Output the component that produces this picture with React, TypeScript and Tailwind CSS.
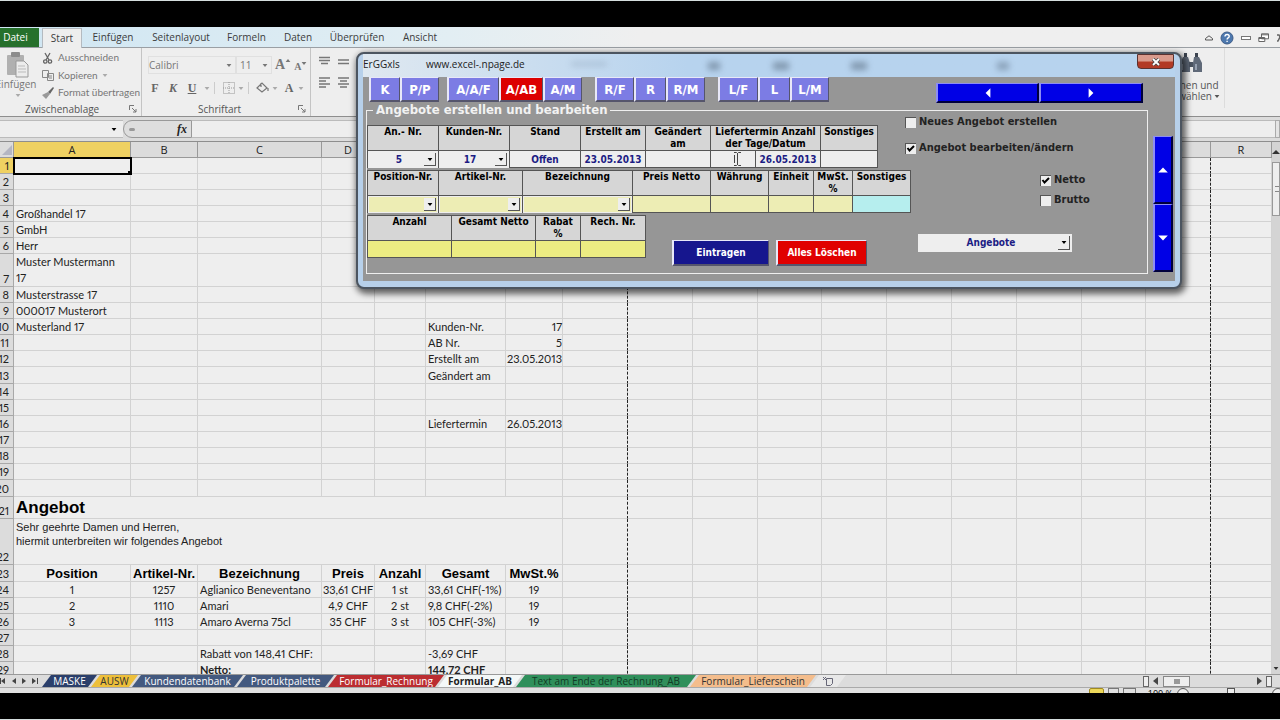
import * as React from "react"

type Cell = { text: string; className?: string }
type Row = { n: number; height: string; cells?: Record<string, Cell>; merged?: React.ReactNode }

const COLUMNS = [
  { name: "A", width: "w-[117px]" },
  { name: "B", width: "w-[67px]" },
  { name: "C", width: "w-[124px]" },
  { name: "D", width: "w-[53px]" },
  { name: "E", width: "w-[51px]" },
  { name: "F", width: "w-[80px]" },
  { name: "G", width: "w-[57px]" },
  { name: "H", width: "w-[65px]" },
  { name: "I", width: "w-[65px]" },
  { name: "J", width: "w-[65px]" },
  { name: "K", width: "w-[64px]" },
  { name: "L", width: "w-[65px]" },
  { name: "M", width: "w-[65px]" },
  { name: "N", width: "w-[65px]" },
  { name: "O", width: "w-[65px]" },
  { name: "P", width: "w-[64px]" },
  { name: "Q", width: "w-[65px]" },
  { name: "R", width: "" },
]

const HEAD = "text-center font-bold text-[13px] font-['Liberation_Sans',sans-serif] text-black"
const CENTER = "text-center"
const RIGHT = "text-right"

const item = (pos: string, nr: string, name: string, price: string, count: string, total: string): Record<string, Cell> => ({
  A: { text: pos, className: CENTER },
  B: { text: nr, className: CENTER },
  C: { text: name },
  D: { text: price, className: CENTER },
  E: { text: count, className: CENTER },
  F: { text: total },
  G: { text: "19", className: CENTER },
})

const ROWS: Row[] = [
  { n: 1, height: "h-4" },
  { n: 2, height: "h-4" },
  { n: 3, height: "h-4" },
  { n: 4, height: "h-4", cells: { A: { text: "Großhandel 17" } } },
  { n: 5, height: "h-4", cells: { A: { text: "GmbH" } } },
  { n: 6, height: "h-4", cells: { A: { text: "Herr" } } },
  { n: 7, height: "h-[33px]", cells: { A: { text: "Muster Mustermann\n17", className: "whitespace-pre-line" } } },
  { n: 8, height: "h-4", cells: { A: { text: "Musterstrasse 17" } } },
  { n: 9, height: "h-4", cells: { A: { text: "000017 Musterort" } } },
  { n: 10, height: "h-4", cells: { A: { text: "Musterland 17" }, F: { text: "Kunden-Nr." }, G: { text: "17", className: RIGHT } } },
  { n: 11, height: "h-4", cells: { F: { text: "AB Nr." }, G: { text: "5", className: RIGHT } } },
  { n: 12, height: "h-4", cells: { F: { text: "Erstellt am" }, G: { text: "23.05.2013", className: RIGHT } } },
  { n: 13, height: "h-[17px]", cells: { F: { text: "Geändert am" } } },
  { n: 14, height: "h-4" },
  { n: 15, height: "h-4" },
  { n: 16, height: "h-4", cells: { F: { text: "Liefertermin" }, G: { text: "26.05.2013", className: RIGHT } } },
  { n: 17, height: "h-4" },
  { n: 18, height: "h-4" },
  { n: 19, height: "h-4" },
  { n: 20, height: "h-[17px]" },
  {
    n: 21,
    height: "h-[22px]",
    merged: <div className="text-[17px] leading-[21px] font-bold text-black">Angebot</div>,
  },
  {
    n: 22,
    height: "h-[46px]",
    merged: (
      <div className="pt-px text-[11px] leading-[14px]">
        Sehr geehrte Damen und Herren,
        <br />
        hiermit unterbreiten wir folgendes Angebot
      </div>
    ),
  },
  {
    n: 23,
    height: "h-[17px]",
    cells: {
      A: { text: "Position", className: HEAD },
      B: { text: "Artikel-Nr.", className: HEAD },
      C: { text: "Bezeichnung", className: HEAD },
      D: { text: "Preis", className: HEAD },
      E: { text: "Anzahl", className: HEAD },
      F: { text: "Gesamt", className: HEAD },
      G: { text: "MwSt.%", className: HEAD },
    },
  },
  { n: 24, height: "h-4", cells: item("1", "1257", "Aglianico Beneventano", "33,61 CHF", "1 st", "33,61 CHF(-1%)") },
  { n: 25, height: "h-4", cells: item("2", "1110", "Amari", "4,9 CHF", "2 st", "9,8 CHF(-2%)") },
  { n: 26, height: "h-4", cells: item("3", "1113", "Amaro Averna 75cl", "35 CHF", "3 st", "105 CHF(-3%)") },
  { n: 27, height: "h-4" },
  { n: 28, height: "h-4", cells: { C: { text: "Rabatt von 148,41 CHF:" }, F: { text: "-3,69 CHF" } } },
  {
    n: 29,
    height: "h-4",
    cells: { C: { text: "Netto:", className: "font-bold" }, F: { text: "144,72 CHF", className: "font-bold" } },
  },
]

/* ---------- small drawings ---------- */

function Caret({ className = "" }: { className?: string }) {
  return (
    <svg viewBox="-1 0 10 5" className={`h-[3px] w-1.5 shrink-0 ${className}`} aria-hidden="true">
      <path d="M0 0h8L4 5z" fill="currentColor" />
    </svg>
  )
}

function Launcher() {
  return (
    <svg viewBox="0 0 8 8" className="size-2" fill="none" stroke="#777" aria-hidden="true">
      <path d="M.5 5V.5H5M3 3l4 4M7 4v3H4" />
    </svg>
  )
}

function Lines({ d }: { d: string }) {
  return (
    <svg viewBox="0 0 14 12" className="h-3 w-3.5" fill="none" stroke="#777" strokeWidth="1.4" aria-hidden="true">
      <path d={d} />
    </svg>
  )
}

/* ---------- ribbon ---------- */

const RIBBON_TABS = [
  { name: "Einfügen", width: "w-[62px]" },
  { name: "Seitenlayout", width: "w-[74px]" },
  { name: "Formeln", width: "w-[57px]" },
  { name: "Daten", width: "w-[46px]" },
  { name: "Überprüfen", width: "w-[72px]" },
  { name: "Ansicht", width: "w-[54px]" },
]

function RibbonTabs() {
  return (
    <nav className="flex h-[21px] items-stretch border-b border-[#9a9fa4] bg-gradient-to-r from-[#cfe6f3] via-[#e2eef3] via-35% to-[#efefef] to-50% pt-px text-[10px] text-[#3c3c3c]">
      <button className="w-[39px] bg-[#26702c] pr-2 text-white">Datei</button>
      <button className="-mb-px ml-[3px] w-10 border-x border-t border-[#b4bac0] bg-[#eeeeee]">Start</button>
      {RIBBON_TABS.map((tab) => (
        <button key={tab.name} className={tab.width}>
          {tab.name}
        </button>
      ))}
      <div className="ml-auto flex items-center gap-[7px] overflow-hidden">
        <button aria-label="Menüband minimieren">
          <svg viewBox="0 0 8 6" className="h-1.5 w-2" fill="none" stroke="#555">
            <path d="M.5 3.500 4 .8l3.500 2.700v1.500h-7z" />
          </svg>
        </button>
        <button aria-label="Hilfe">
          <svg viewBox="0 0 14 14" className="size-3.5">
            <circle cx="7" cy="7" r="6" fill="#4d78ae" stroke="#3d5c88" />
            <path d="M5 5.400c0-2.700 4.200-2.500 4.200 0 0 1.500-2.100 1.500-2.100 3M7.100 9.800v1.200" fill="none" stroke="#fff" strokeWidth="1.400" />
          </svg>
        </button>
        <button aria-label="Minimieren">
          <svg viewBox="0 0 10 6" className="h-1.5 w-2.5" fill="#fff" stroke="#777">
            <rect x=".5" y="1.500" width="9" height="3" />
          </svg>
        </button>
        <button aria-label="Wiederherstellen">
          <svg viewBox="0 0 11 10" className="h-2.5 w-[11px]" fill="#fff" stroke="#666">
            <path d="M3.500.8h7v5h-7zM.8 4.500h6v4h-6z" />
            <path d="M.8 5.500h6M3.500 1.800h7" />
          </svg>
        </button>
        <button aria-label="Schließen" className="-mr-1">
          <svg viewBox="0 0 8 8" className="size-2" fill="none" stroke="#666" strokeWidth="1.500">
            <path d="M1 1h2l3 6h1M7 1H5L2 7H1" />
          </svg>
        </button>
      </div>
    </nav>
  )
}

function Ribbon() {
  return (
    <div className="flex h-[69px] border-b border-[#8e8e8e] bg-[#eeeeee] text-[10px] text-[#777]">
      <section className="flex w-[142px] flex-col border-r border-[#c4c4c4]">
        <div className="flex flex-1">
          <button className="flex w-[36px] shrink-0 flex-col items-center pt-1">
            <svg viewBox="0 0 24 26" className="h-[26px] w-6" aria-hidden="true">
              <rect x="1" y="3" width="17" height="20" rx="1" fill="#b0b0b0" />
              <rect x="5" y="0" width="9" height="5" rx="1" fill="#8b8b8b" />
              <path d="M10 9h8l4 4v12H10z" fill="#ececec" stroke="#999" />
              <path d="M12 14h7M12 17h8M12 20h8" stroke="#bbb" />
            </svg>
            <span className="-ml-1 leading-3">Einfügen</span>
            <Caret className="mt-1 text-[#aaa]" />
          </button>
          <div className="flex flex-col pt-px pl-[6px] font-['Lato',sans-serif]">
            <button className="flex h-[17px] items-center gap-1">
              <svg viewBox="0 0 12 12" className="size-3" fill="none" stroke="#666" strokeWidth="1.300" aria-hidden="true">
                <path d="M3 1l4 7M8 1L4 8" />
                <circle cx="3.300" cy="9.500" r="1.700" />
                <circle cx="8" cy="9.500" r="1.700" />
              </svg>
              Ausschneiden
            </button>
            <button className="flex h-[18px] items-center gap-1">
              <svg viewBox="0 0 12 12" className="size-3" fill="#eee" stroke="#888" aria-hidden="true">
                <path d="M.5 1.500h6v7h-6zM5.500 4.500h6v7h-6zM7 7h3M7 9h3" />
              </svg>
              Kopieren
              <Caret className="text-[#aaa]" />
            </button>
            <button className="flex h-[17px] items-center gap-1 whitespace-nowrap">
              <svg viewBox="0 0 12 12" className="size-3" aria-hidden="true">
                <path d="M11 0 6 5l2 2 4-6z" fill="#666" />
                <path d="M6 5 0 8l4 4 4-5z" fill="#999" />
              </svg>
              Format übertragen
            </button>
          </div>
        </div>
        <div className="flex h-[14px] items-center justify-between pr-1 pl-[25px] text-[#555]">
          Zwischenablage
          <Launcher />
        </div>
      </section>

      <section className="flex w-[169px] flex-col border-r border-[#c4c4c4]">
        <div className="flex flex-1 flex-col gap-[5px] pt-[8px] pl-[6px]">
          <div className="flex h-[18px] items-center">
            <button className="flex h-full w-[88px] items-center justify-between border border-[#e0e0e0] pr-[3px]">
              Calibri
              <Caret />
            </button>
            <button className="flex h-full w-[36px] items-center justify-between border border-[#e0e0e0] pr-[3px] pl-[3px]">
              11
              <Caret />
            </button>
            <button className="ml-[3px] flex items-start font-['Liberation_Serif',serif] text-[14px] leading-none font-bold">
              A<Caret className="mt-px rotate-180" />
            </button>
            <button className="mt-[3px] ml-[3px] flex items-start font-['Liberation_Serif',serif] text-[10px] leading-none font-bold">
              A<Caret />
            </button>
          </div>
          <div className="flex h-[18px] items-center font-['Liberation_Serif',serif] text-[12px] font-bold text-[#666]">
            <button className="w-[14px]">F</button>
            <button className="w-[22px] italic">K</button>
            <button className="w-[16px] underline">U</button>
            <Caret className="ml-1 text-[#aaa]" />
            <span className="mx-1 h-3 border-l border-[#ccc]" />
            <button aria-label="Rahmen" className="ml-1">
              <svg viewBox="0 0 12 12" className="size-3" fill="none" stroke="#999" strokeDasharray="1 1">
                <path d="M.5.5h11v11H.5zM6 0v12M0 6h12" />
              </svg>
            </button>
            <Caret className="ml-[3px] text-[#aaa]" />
            <span className="mx-1 h-3 border-l border-[#ccc]" />
            <button aria-label="Füllfarbe" className="ml-[3px]">
              <svg viewBox="0 0 14 12" className="h-3 w-3.5" fill="none" stroke="#777" strokeWidth="1.200">
                <path d="M1 6l5-5 5 5-5 4zM5 1v4M12 6v3" />
              </svg>
            </button>
            <Caret className="ml-0.5 text-[#aaa]" />
            <button className="ml-1 w-[14px]">A</button>
            <Caret className="ml-0.5 text-[#aaa]" />
          </div>
        </div>
        <div className="flex h-[14px] items-center justify-between pr-1 pl-[56px] text-[#555]">
          Schriftart
          <Launcher />
        </div>
      </section>

      <section className="grid h-[50px] grid-cols-2 gap-x-[5px] pt-2 pl-[7px]">
        <Lines d="M1 1.500h11M1 4.500h11M3 7.500h7" />
        <Lines d="M1 4h11M1 7.500h11" />
        <Lines d="M1 1h11M1 4h7M1 7h11M1 10h7" />
        <Lines d="M1 1h11M3 4h7M1 7h11M3 10h7" />
      </section>

      <section className="mr-[55px] ml-auto flex h-[60px] flex-col items-center border-r border-[#dcdcdc] pt-1 pr-1 text-[#555]">
        <svg viewBox="0 0 24 24" className="size-6" aria-hidden="true">
          <path d="M4 5h5l2 6v9H1v-9zM15 5h5l3 6v9h-9v-9z" fill="#5f6978" />
          <path d="M5 1h3v4H5zM16 1h3v4h-3z" fill="#3c4450" />
          <path d="M10 10h4v5h-4z" fill="#4b5462" />
          <path d="M3 12v6M17 12v6" stroke="#aab4c4" strokeWidth="1.500" />
        </svg>
        <span className="pt-1 leading-[11px]">Suchen und</span>
        <span className="flex items-center gap-0.5 leading-[11px]">
          auswählen
          <Caret />
        </span>
      </section>
    </div>
  )
}

function FormulaBar() {
  return (
    <div className="flex h-[25px] items-center border-b border-[#8e8e8e] bg-[#dcdcdc]">
      <div className="flex h-[18px] w-[123px] items-center border-y border-[#bbb] bg-[#eeeeee]">
        <input aria-label="Namenfeld" className="h-full w-[111px] bg-transparent text-[10px] outline-none" />
        <Caret className="text-black" />
      </div>
      <div className="flex h-[18px] w-[69px] items-center justify-between rounded-l-full border border-[#999] bg-[#dedede] pr-[4px] pl-[5px]">
        <span className="h-[3px] w-1.5 rounded-full bg-[#999]" />
        <button className="font-['Liberation_Serif',serif] text-[12px] font-bold text-[#222] italic">fx</button>
      </div>
      <input aria-label="Bearbeitungsleiste" className="h-[18px] min-w-0 flex-1 border-y border-[#bbb] bg-[#eeeeee] outline-none" />
      <div className="h-[18px] w-[5px] border border-[#aaa] bg-[#e4e4e4]" />
    </div>
  )
}

/* ---------- worksheet ---------- */

const isPageBreak = (name: string) => name === "H" || name === "Q"

function Sheet() {
  return (
    <div className="flex min-h-0 flex-1 overflow-hidden">
      <div className="min-w-0 flex-1 overflow-hidden">
        <table className="w-full min-w-[1240px] table-fixed border-separate border-spacing-0 bg-[#eeeeee] font-['Lato',sans-serif] text-[11px] text-[#222] proportional-nums">
          <colgroup>
            <col className="w-[14px]" />
            {COLUMNS.map((col) => (
              <col key={col.name} className={col.width} />
            ))}
          </colgroup>
          <thead>
            <tr className="h-[16px]">
              <th className="border-r border-b border-[#999] bg-[#dcdcdc] p-0">
                <svg viewBox="0 0 12 12" className="ml-auto size-3" aria-hidden="true">
                  <path d="M11 1v10H1z" fill="#b4b6c2" />
                </svg>
              </th>
              {COLUMNS.map((col) => (
                <th
                  key={col.name}
                  className={`border-r border-b border-[#999] p-0 font-['Open_Sans',sans-serif] font-normal leading-[15px] ${
                    col.name === "A" ? "bg-[#efd162]" : "bg-[#dcdcdc]"
                  }`}
                >
                  {col.name}
                </th>
              ))}
            </tr>
          </thead>
          <tbody>
            {ROWS.map((row) => (
              <tr key={row.n} className={row.height}>
                <th
                  className={`overflow-hidden border-r border-b border-[#a8a8a8] p-0 align-bottom font-normal leading-[15px] ${
                    row.n === 1 ? "bg-[#efd162]" : "bg-[#dcdcdc]"
                  }`}
                >
                  <div className="flex justify-end pr-1">{row.n}</div>
                </th>
                {row.merged && (
                  <td
                    colSpan={7}
                    className="border-r border-b border-[#d2d2d2] p-0 pl-[2px] align-top font-['Liberation_Sans',sans-serif]"
                  >
                    {row.merged}
                  </td>
                )}
                {COLUMNS.slice(row.merged ? 7 : 0).map((col) => {
                  const cell = row.cells?.[col.name]
                  return (
                    <td
                      key={col.name}
                      className={`border-r border-b border-b-[#d2d2d2] p-0 align-bottom ${col.name === "G" || col.name === "D" ? "" : "px-[2px]"} ${
                        isPageBreak(col.name) ? "border-r-[#222] [border-right-style:dashed]" : "border-r-[#d2d2d2]"
                      } ${row.n === 7 ? "leading-4" : "leading-[15px] whitespace-nowrap"} ${
                        row.n === 1 && col.name === "A" ? "relative outline-2 -outline-offset-1 outline-black" : ""
                      } ${cell?.className ?? ""}`}
                    >
                      {cell?.text}
                      {row.n === 1 && col.name === "A" && (
                        <span className="absolute -right-[2px] -bottom-[2px] size-1 bg-black" />
                      )}
                    </td>
                  )
                })}
              </tr>
            ))}
          </tbody>
        </table>
      </div>
      <div className="flex w-2 flex-col items-center bg-[#d4d4d4] pt-2">
        <svg viewBox="0 0 8 4" className="h-1 w-2 shrink-0" aria-hidden="true">
          <path d="M4 0l4 4H0z" fill="#333" />
        </svg>
        <div className="mt-2 flex h-[54px] w-full items-center border border-[#999] bg-[#eeeeee] pl-[2px] text-[#777]">
          <span className="h-[6px] w-1 border-y border-[#888]" />
        </div>
        <Caret className="mt-auto mb-1 text-[#333]" />
      </div>
    </div>
  )
}

const SHEET_TABS = [
  { name: "MASKE", className: "w-[55px] bg-[#2b3f6b] text-white" },
  { name: "AUSW", className: "w-[47px] bg-[#edbf3a] text-[#333]" },
  { name: "Kundendatenbank", className: "w-[111px] bg-[#43597f] text-white" },
  { name: "Produktpalette", className: "w-[97px] bg-[#43597f] text-white" },
  { name: "Formular_Rechnung", className: "w-[116px] bg-[#bb2d31] text-white" },
  { name: "Formular_AB", className: "w-[84px] bg-[#f4f8f8] font-bold text-[#222]" },
  { name: "Text am Ende der Rechnung_AB", className: "w-[180px] bg-[#2f8f5b] text-[#123c26]" },
  { name: "Formular_Lieferschein", className: "w-[126px] bg-[#f4bd8c] text-[#333]" },
]

const SLANT = "[clip-path:polygon(9px_0,100%_0,calc(100%-9px)_100%,0_100%)]"

function SheetTabs() {
  return (
    <div className="flex h-[13px] shrink-0 items-stretch border-t border-[#999] bg-[#dcdcdc] text-[10px] leading-3">
      <div className="flex w-[42px] shrink-0 items-center justify-between pr-1 text-[#444]">
        {["M5 0v6L1 3zM0 0h1v6H0z", "M5 0v6L1 3z", "M1 0v6l4-3z", "M0 0v6l4-3zM5 0h1v6H5z"].map((d) => (
          <button key={d} aria-label="Blatt wechseln">
            <svg viewBox="0 0 6 6" className="size-1.5">
              <path d={d} fill="currentColor" />
            </svg>
          </button>
        ))}
      </div>
      {SHEET_TABS.map((tab) => (
        <button key={tab.name} className={`-mr-[6px] whitespace-nowrap ${SLANT} ${tab.className}`}>
          {tab.name}
        </button>
      ))}
      <button aria-label="Tabellenblatt einfügen" className={`w-9 bg-[#e8e8e8] pl-3 ${SLANT}`}>
        <svg viewBox="0 0 12 10" className="h-2.5 w-3" fill="none" stroke="#667">
          <path d="M4.500 2.500h6v5l-2 2h-4zM1 1l3 3M4 1 1 4" />
        </svg>
      </button>
      <div className="ml-auto flex w-[137px] items-center text-[#444]">
        <span className="h-[11px] w-[6px] border border-[#666] bg-[#eee]" />
        <svg viewBox="0 0 5 8" className="ml-1 h-2 w-[5px]" aria-hidden="true">
          <path d="M5 0v8L0 4z" fill="currentColor" />
        </svg>
        <span className="ml-[5px] flex h-[11px] w-[27px] items-center justify-center border border-[#888] bg-[#eeeeee]">
          <span className="h-[5px] w-[6px] bg-[#999]" />
        </span>
        <svg viewBox="0 0 5 8" className="ml-auto h-2 w-[5px]" aria-hidden="true">
          <path d="M0 0v8l5-4z" fill="currentColor" />
        </svg>
        <span className="mr-2 ml-1 h-[11px] w-[6px] border border-[#666] bg-[#eee]" />
      </div>
    </div>
  )
}

function StatusBar() {
  return (
    <div className="flex h-[6px] shrink-0 justify-end gap-1 overflow-hidden border-t border-[#aaa] bg-[#e0e0e0] text-[9px] leading-3">
      <span className="h-3 w-[15px] rounded-xs border border-[#a08a20] bg-[#ecd75a]" />
      <span className="h-3 w-[11px] border border-[#777]" />
      <span className="h-3 w-[13px] border border-[#777]" />
      <span className="ml-2">100 %</span>
      <span className="size-3 rounded-full border border-[#555] bg-[#eee]" />
      <span className="mr-[33px] ml-[34px] h-3 w-2 border border-[#555] bg-[#eee]" />
      <span className="-mr-1 size-3 rounded-full border border-[#555] bg-[#eee]" />
    </div>
  )
}

/* ---------- dialog ---------- */

const TOOL_GROUPS = [
  [
    { name: "K", width: "w-[31px]" },
    { name: "P/P", width: "w-[39px]" },
  ],
  [
    { name: "A/A/F", width: "w-[52px]" },
    { name: "A/AB", width: "w-[44px]" },
    { name: "A/M", width: "w-[39px]" },
  ],
  [
    { name: "R/F", width: "w-[39px]" },
    { name: "R", width: "w-[32px]" },
    { name: "R/M", width: "w-[39px]" },
  ],
  [
    { name: "L/F", width: "w-[40px]" },
    { name: "L", width: "w-[32px]" },
    { name: "L/M", width: "w-[39px]" },
  ],
]

const GROUP_GAPS = ["", "ml-[8px]", "ml-[13px]", "ml-[13px]"]

interface FieldProps {
  label: string
  width: string
  fill?: string
  value?: string
  select?: boolean
}

function Field({ label, width, fill = "bg-[#eeeeee]", value = "", select }: FieldProps) {
  const id = React.useId()
  return (
    <div className={`flex flex-col border-r border-[#555] ${width}`}>
      <label
        htmlFor={id}
        className="h-[26px] border-y border-[#555] bg-[#d6d6d6] text-center leading-3 whitespace-pre-line text-black"
      >
        {label}
      </label>
      {select ? (
        <Dropdown id={id} value={value} className={`h-[17px] ${fill}`} />
      ) : (
        <input
          id={id}
          defaultValue={value}
          className={`h-[17px] w-full min-w-0 border-b border-[#555] text-center text-[#1c1c84] outline-none ${fill}`}
        />
      )}
    </div>
  )
}

function Dropdown({ id, value, className }: { id?: string; value: string; className: string }) {
  return (
    <div className={`relative border border-[#eee] ${className}`}>
      <select
        id={id}
        aria-label={id ? undefined : "Formular"}
        defaultValue={value}
        className="block size-full appearance-none bg-transparent pr-2 text-center leading-none text-[#1c1c84] outline-none [text-align-last:center]"
      >
        <option value={value}>{value}</option>
      </select>
      <span className="pointer-events-none absolute inset-y-px right-px flex w-3 items-center justify-center border-r border-b border-[#555] bg-[#eeeeee] text-black">
        <Caret />
      </span>
    </div>
  )
}

function Check({ label, checked = false }: { label: string; checked?: boolean }) {
  return (
    <label className="flex h-3 items-center gap-[3px] text-[11px] whitespace-nowrap text-[#222]">
      <span className="relative size-[11px]">
        <input
          type="checkbox"
          defaultChecked={checked}
          className="peer block size-full appearance-none border-t border-l border-[#555] bg-[#eeeeee]"
        />
        <svg
          viewBox="0 0 11 11"
          className="pointer-events-none absolute inset-0 hidden size-full peer-checked:block"
          fill="none"
          stroke="#000"
          strokeWidth="2"
        >
          <path d="M2.500 5l2 2.500L9 3" />
        </svg>
      </span>
      {label}
    </label>
  )
}

const BEVEL = "border border-t-[#e8e8f8] border-l-2 border-l-[#e8e8f8] border-r-[#55556c] border-b-2 border-b-[#55556c]"
const NAV = "flex items-center justify-center border border-t-[#8c8cf4] border-l-2 border-l-[#8c8cf4] border-r-2 border-r-[#00003c] border-b-2 border-b-[#00003c] bg-[#0000e6] text-white"

function Arrow({ d, label, className }: { d: string; label: string; className: string }) {
  return (
    <button aria-label={label} className={`${NAV} ${className}`}>
      <svg viewBox="0 0 10 10" className="size-3">
        <path d={d} fill="currentColor" />
      </svg>
    </button>
  )
}

function OfferDialog() {
  const [active, setActive] = React.useState("A/AB")

  return (
    <div
      role="dialog"
      aria-label="ErGGxls"
      className="absolute top-[51px] left-[356px] w-[826px] overflow-hidden rounded-lg border-2 border-[#4c5560] bg-[#b7d0ea] px-[5px] pb-[6px] shadow-[2px_3px_6px_2px_rgba(0,0,0,0.6)]"
    >
      <div className="relative flex h-[23px] items-center bg-gradient-to-r from-[#dfe8f0] to-[#b7d3ee] to-40% pb-0.5 text-[10px] text-[#222]">
        {/* ribbon icons showing through the glass frame */}
        <span className="absolute top-2 left-[345px] h-2 w-3 bg-[#5d7085] opacity-60 blur-[3px]" />
        <span className="absolute top-2 left-[410px] h-2 w-4 bg-[#5d7085] opacity-60 blur-[3px]" />
        <span className="absolute top-2 left-[488px] h-2 w-4 bg-[#5d7085] opacity-60 blur-[3px]" />
        <span className="absolute top-2 left-[634px] h-2 w-3 bg-[#5d7085] opacity-50 blur-[3px]" />
        <span className="absolute top-2 left-[208px] h-1 w-9 bg-[#5d7085] opacity-25 blur-[3px]" />
        <span className="w-[63px]">ErGGxls</span>
        <span>www.excel-.npage.de</span>
        <button
          aria-label="Schließen"
          className="mr-px mb-auto ml-auto flex h-[15px] w-[37px] items-center justify-center rounded-b-sm border border-[#5b3230] bg-gradient-to-b from-[#d99a8c] from-45% to-[#b23a26] to-55%"
        >
          <svg viewBox="0 0 10 8" className="h-2 w-2.5" fill="none">
            <path d="M2 1l6 6M8 1L2 7" stroke="#444" strokeWidth="3.400" />
            <path d="M2 1l6 6M8 1L2 7" stroke="#fff" strokeWidth="1.800" />
          </svg>
        </button>
      </div>

      <div className="flex bg-[#969696] pl-[3px] font-['DejaVu_Sans_Condensed','DejaVu_Sans',sans-serif] text-[10px] font-bold">
        <div className="w-[782px] pb-[7px]">
          <div className="flex h-[27px] items-start pl-[3px]">
            {TOOL_GROUPS.map((group, i) => (
              <div key={group[0].name} className={`flex ${GROUP_GAPS[i]}`}>
                {group.map((tool) => (
                  <button
                    key={tool.name}
                    onClick={() => setActive(tool.name)}
                    className={`h-[25px] text-[13px] leading-none text-white ${BEVEL} ${tool.width} ${
                      active === tool.name ? "bg-[#dc0000]" : "bg-[#7c7ce4]"
                    }`}
                  >
                    {tool.name}
                  </button>
                ))}
              </div>
            ))}
            <div className="mt-[6px] ml-auto flex pr-[5px]">
              <Arrow d="M7 1v8L3 5z" label="Zurück" className="h-[20px] w-[103px]" />
              <Arrow d="M3 1v8l4-4z" label="Weiter" className="h-[20px] w-[104px]" />
            </div>
          </div>

          <fieldset className="flex flex-col gap-[2px] border border-[#eeeeee] pb-[7px]">
            <legend className="ml-[6px] px-[3px] text-[13px] leading-3 text-[#f2f2f2]">Angebote erstellen und bearbeiten</legend>

            <div className="flex items-start">
              <div className="mt-[9px] flex border-l border-[#555]">
                <Field label="An.- Nr." width="w-[71px]" value="5" select />
                <Field label="Kunden-Nr." width="w-[71px]" value="17" select />
                <Field label="Stand" width="w-[71px]" value="Offen" />
                <Field label="Erstellt am" width="w-[65px]" value="23.05.2013" />
                <Field label={"Geändert\nam"} width="w-[65px]" />
                <div className="flex w-[110px] flex-col border-r border-[#555]">
                  <span
                    id="delivery"
                    className="h-[26px] border-y border-[#555] bg-[#d6d6d6] text-center leading-3 whitespace-nowrap text-black"
                  >
                    Liefertermin Anzahl
                    <br />
                    der Tage/Datum
                  </span>
                  <div className="relative flex">
                    <input
                      aria-labelledby="delivery"
                      className="h-[17px] w-[45px] border-r border-b border-[#555] bg-[#eeeeee] outline-none"
                    />
                    <input
                      aria-labelledby="delivery"
                      defaultValue="26.05.2013"
                      className="h-[17px] min-w-0 flex-1 border-b border-[#555] bg-[#eeeeee] text-center text-[#1c1c84] outline-none"
                    />
                    <svg viewBox="0 0 8 14" className="absolute top-px left-[22px] h-3.5 w-2" fill="none" stroke="#444" aria-hidden="true">
                      <path d="M1 .5h2.500l1 1 1-1H8M4.500 1v12M1 13.500h2.500l1-1 1 1H8M1.500 3v8" />
                    </svg>
                  </div>
                </div>
                <Field label="Sonstiges" width="w-[57px]" />
              </div>
              <div className="ml-[27px] flex flex-col gap-[14px]">
                <Check label="Neues Angebot erstellen" />
                <Check label="Angebot bearbeiten/ändern" checked />
              </div>
            </div>

            <div className="flex items-start">
              <div className="flex border-l border-[#555]">
                <Field label="Position-Nr." width="w-[71px]" fill="bg-[#ededb4]" select />
                <Field label="Artikel-Nr." width="w-[84px]" fill="bg-[#ededb4]" select />
                <Field label="Bezeichnung" width="w-[110px]" fill="bg-[#ededb4]" select />
                <Field label="Preis Netto" width="w-[78px]" fill="bg-[#ededb4]" />
                <Field label="Währung" width="w-[58px]" fill="bg-[#ededb4]" />
                <Field label="Einheit" width="w-[45px]" fill="bg-[#ededb4]" />
                <Field label={"MwSt.\n%"} width="w-[39px]" fill="bg-[#ededb4]" />
                <Field label="Sonstiges" width="w-[58px]" fill="bg-[#b6eeee]" />
              </div>
              <div className="ml-[129px] flex flex-col gap-2 pt-1">
                <Check label="Netto" checked />
                <Check label="Brutto" />
              </div>
            </div>

            <div className="flex items-start">
              <div className="flex border-l border-[#555]">
                <Field label="Anzahl" width="w-[84px]" fill="bg-[#ecec82]" />
                <Field label="Gesamt Netto" width="w-[84px]" fill="bg-[#ecec82]" />
                <Field label={"Rabat\n%"} width="w-[45px]" fill="bg-[#ecec82]" />
                <Field label="Rech. Nr." width="w-[65px]" fill="bg-[#ecec82]" />
              </div>
              <button className={`mt-[25px] ml-[26px] h-[26px] w-[97px] bg-[#16168e] text-white ${BEVEL}`}>Eintragen</button>
              <button className={`mt-[25px] ml-[7px] h-[26px] w-[91px] bg-[#e00000] whitespace-nowrap text-white ${BEVEL}`}>
                Alles Löschen
              </button>
              <Dropdown value="Angebote" className="mt-[19px] ml-[51px] h-[18px] w-[154px] bg-[#eeeeee]" />
            </div>
          </fieldset>
        </div>

        <div className="ml-[5px] flex flex-col pt-[59px]">
          <Arrow d="M1 7h8L5 3z" label="Nach oben" className="h-[68px] w-[20px]" />
          <Arrow d="M1 3h8L5 7z" label="Nach unten" className="h-[68px] w-[20px]" />
        </div>
      </div>
    </div>
  )
}

export default function App() {
  return (
    <div className="relative flex h-screen flex-col overflow-hidden border-y border-[#d5dede] bg-black font-['Open_Sans',sans-serif]">
      <div className="h-[26px] shrink-0" />
      <RibbonTabs />
      <Ribbon />
      <FormulaBar />
      <Sheet />
      <SheetTabs />
      <StatusBar />
      <div className="h-[26px] shrink-0" />
      <OfferDialog />
    </div>
  )
}
